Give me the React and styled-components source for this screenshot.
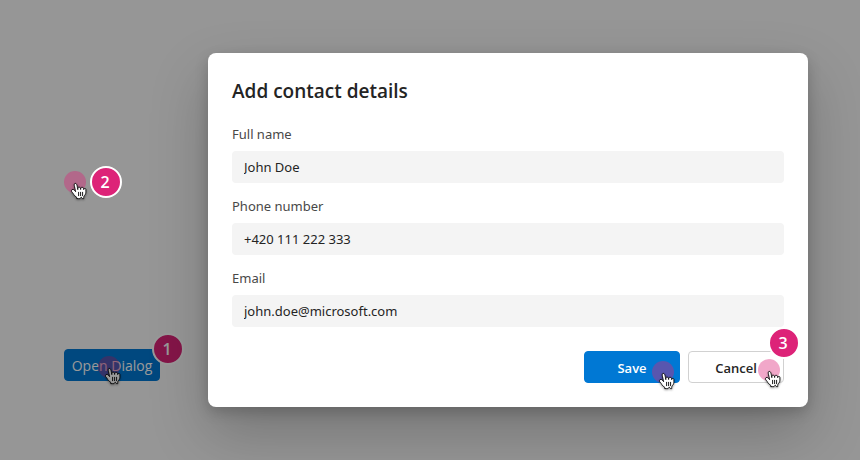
import React from "react";
import styled, { createGlobalStyle } from "styled-components";

const GlobalStyle = createGlobalStyle`
  *, *::before, *::after { box-sizing: border-box; }
  body {
    margin: 0;
    background: #fafafa;
    font-family: "Noto Sans", "Open Sans", sans-serif;
    color: #242424;
  }
`;

const Stage = styled.main`
  position: relative;
  display: grid;
  grid-template-columns: 208px minmax(0, 1fr);
  align-items: start;
  min-height: 100vh;
  padding: 53px 52px 53px 0;
  overflow: hidden;
`;

const Backdrop = styled.div`
  position: absolute;
  inset: 0;
  background: rgba(0, 0, 0, 0.4);
`;

const Outside = styled.div`
  display: flex;
  flex-direction: column;
  justify-content: space-between;
  align-items: flex-start;
  align-self: stretch;
  padding: 113px 0 26px 64px;
`;

const DismissHint = styled.div`
  position: relative;
  z-index: 1;
  display: flex;
  align-items: center;
  gap: 4px;
`;

const ButtonSlot = styled.div`
  position: relative;
  display: flex;
`;

const Button = styled.button`
  min-width: 96px;
  height: 32px;
  padding: 2px 4px 0;
  border: 1px solid ${(p) => (p.$primary ? "#0078d4" : "#d1d1d1")};
  border-radius: 4px;
  background: ${(p) => (p.$primary ? "#0078d4" : "#ffffff")};
  color: ${(p) => (p.$primary ? "#ffffff" : "#242424")};
  font-family: "Open Sans", "Noto Sans", sans-serif;
  font-size: ${(p) => (p.$large ? 14 : 13)}px;
  font-weight: ${(p) => (p.$large ? 500 : 600)};
  line-height: 20px;
  white-space: nowrap;
`;

const Badge = styled.span`
  display: flex;
  align-items: center;
  justify-content: center;
  width: 32px;
  height: 32px;
  padding-right: 2px;
  border: 2px solid #ffffff;
  border-radius: 50%;
  background: #dd2378;
  color: #ffffff;
  font-family: "Open Sans", "Noto Sans", sans-serif;
  font-size: 16px;
  font-weight: 600;
  line-height: 20px;
`;

const CornerBadge = styled(Badge)`
  position: absolute;
  top: ${(p) => p.$top}px;
  right: ${(p) => p.$right}px;
`;

const Touch = styled.span`
  position: relative;
  flex: none;
  width: 22px;
  height: 22px;
  border-radius: 50%;
  background: rgba(221, 35, 120, 0.4);
  pointer-events: none;
`;

const PinnedTouch = styled(Touch)`
  position: absolute;
  top: ${(p) => p.$top}px;
  right: ${(p) => p.$right}px;
`;

const HandSvg = styled.svg`
  position: absolute;
  left: 6px;
  top: 11px;
  width: 18px;
  height: 20px;
  overflow: visible;
  filter: drop-shadow(0 1px 1px rgba(0, 0, 0, 0.4));
`;

const Dialog = styled.section`
  position: relative;
  z-index: 1;
  padding: 24px;
  border-radius: 8px;
  background: #ffffff;
  box-shadow: 0 26px 58px rgba(0, 0, 0, 0.22), 0 5px 14px rgba(0, 0, 0, 0.18);
`;

const Title = styled.h1`
  margin: 0 0 17px;
  font-family: "Open Sans", "Noto Sans", sans-serif;
  font-size: 19px;
  font-weight: 600;
  line-height: 28px;
`;

const Form = styled.form`
  display: flex;
  flex-direction: column;
  gap: 11px;
`;

const Field = styled.div`
  display: flex;
  flex-direction: column;
  gap: 5px;
`;

const Label = styled.label`
  padding: 2px 0;
  color: #484848;
  font-size: 13px;
  line-height: 20px;
`;

const Input = styled.input`
  width: 100%;
  height: 32px;
  padding: 0 12px;
  border: 0;
  border-radius: 4px;
  background: #f4f4f4;
  color: #242424;
  font-family: inherit;
  font-size: 13px;
  line-height: 20px;
`;

const Actions = styled.div`
  display: flex;
  justify-content: flex-end;
  gap: 8px;
  padding-top: 13px;
`;

const Hand = () => (
  <HandSvg viewBox="7 7 18 20" aria-hidden="true">
    <path
      d="m11.3 20.4c-.3-.4-.6-1.1-1.2-2-.3-.5-1.2-1.5-1.5-1.9-.2-.4-.2-.6-.1-1 .1-.6.7-1.1 1.4-1.1.5 0 1 .4 1.4.7.2.2.5.6.7.8.2.2.2.3.4.5.2.3.3.5.2.1-.1-.5-.2-1.3-.4-2.1-.1-.6-.2-.7-.3-1.1-.1-.5-.2-.8-.3-1.3-.1-.3-.2-1.1-.3-1.5-.1-.5-.1-1.4.3-1.8.3-.3.9-.4 1.3-.2.5.3.8 1 .9 1.3.2.5.4 1.2.5 2 .2 1 .5 2.5.5 2.8 0-.4-.1-1.1 0-1.5.1-.3.3-.7.7-.8.3-.1.6-.1.9-.1.3.1.6.3.8.5.4.6.4 1.9.4 1.8.1-.4.1-1.2.3-1.6.1-.2.5-.4.7-.5.3-.1.7-.1 1 0 .2 0 .6.3.7.5.2.3.3 1.3.4 1.7 0 .1.1-.4.3-.7.4-.6 1.8-.8 1.9.6v2.3c0 .4-.1 1.3-.2 1.7-.1.3-.4 1-.7 1.4 0 0-1.1 1.2-1.2 1.8-.1.6-.1.6-.1 1s.1.9.1.9-.8.1-1.2 0-.9-.8-1-1.1c-.2-.3-.5-.3-.7 0-.2.4-.7 1.1-1.1 1.1-.7.1-2.1 0-3.1 0 0 0 .2-1-.2-1.4-.3-.3-.8-.8-1.1-1.1z"
      fill="#fff"
      stroke="#000"
      strokeWidth="0.9"
      strokeLinejoin="round"
    />
    <path
      d="M19.6 20.7v-3.4M17.6 20.7v-3.4M15.6 17.3v3.4"
      fill="none"
      stroke="#000"
      strokeWidth="0.9"
      strokeLinecap="round"
    />
  </HandSvg>
);

const fields = [
  { id: "full-name", label: "Full name", type: "text", value: "John Doe" },
  { id: "phone", label: "Phone number", type: "tel", value: "+420 111 222 333" },
  { id: "email", label: "Email", type: "email", value: "john.doe@microsoft.com" },
];

export default function App() {
  return (
    <>
      <GlobalStyle />
      <Stage>
        <Outside>
          <DismissHint>
            <Touch><Hand /></Touch>
            <Badge>2</Badge>
          </DismissHint>
          <ButtonSlot>
            <Button type="button" $primary $large>Open Dialog</Button>
            <PinnedTouch $top={7} $right={40}><Hand /></PinnedTouch>
            <CornerBadge $top={-16} $right={-24}>1</CornerBadge>
          </ButtonSlot>
        </Outside>
        <Backdrop />
        <Dialog role="dialog" aria-labelledby="dialog-title">
          <Title id="dialog-title">Add contact details</Title>
          <Form onSubmit={(e) => e.preventDefault()}>
            {fields.map((f) => (
              <Field key={f.id}>
                <Label htmlFor={f.id}>{f.label}</Label>
                <Input id={f.id} type={f.type} defaultValue={f.value} />
              </Field>
            ))}
            <Actions>
              <ButtonSlot>
                <Button type="submit" $primary>Save</Button>
                <PinnedTouch $top={10} $right={6}><Hand /></PinnedTouch>
              </ButtonSlot>
              <ButtonSlot>
                <Button type="button">Cancel</Button>
                <PinnedTouch $top={8} $right={4}><Hand /></PinnedTouch>
                <CornerBadge $top={-24} $right={-16}>3</CornerBadge>
              </ButtonSlot>
            </Actions>
          </Form>
        </Dialog>
      </Stage>
    </>
  );
}
